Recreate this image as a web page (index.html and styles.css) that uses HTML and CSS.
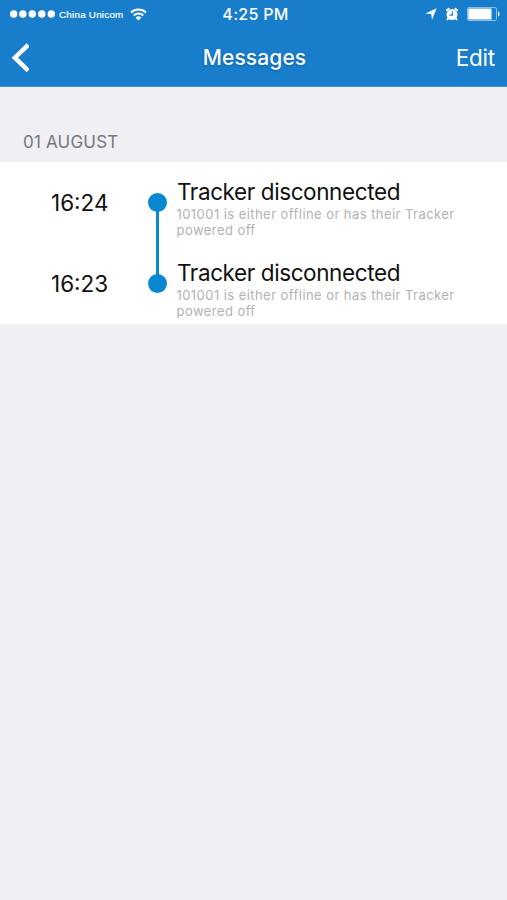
FILE: index.html
```html
<!DOCTYPE html>
<html lang="en">
<head>
<meta charset="utf-8">
<title>Messages</title>
<link rel="stylesheet" href="styles.css">
</head>
<body>
<header class="top">
  <div class="status">
    <div class="carrier">
      <svg class="signal" width="46" height="8" viewBox="0 0 46 8"><circle cx="3.7" cy="4" r="3.7"/><circle cx="12.9" cy="4" r="3.7"/><circle cx="22.3" cy="4" r="3.7"/><circle cx="31.8" cy="4" r="3.7"/><circle cx="41.3" cy="4" r="3.7"/></svg>
      <span class="carrier-name">China Unicom</span>
      <svg class="wifi" width="17" height="13" viewBox="0 0 17 13"><path d="M1 4.5a10.8 10.8 0 0 1 15 0M3.7 7.5a7 7 0 0 1 9.6 0" fill="none" stroke="#fff" stroke-width="2"/><path d="M8.5 12.5 5.6 9.7a4.2 4.2 0 0 1 5.8 0z"/></svg>
    </div>
    <span class="clock">4:25 PM</span>
    <div class="indicators">
      <svg width="12" height="12" viewBox="0 0 12 12"><path d="M11.7.3 7 11.7 6.2 6.1.3 5.4z"/></svg>
      <svg width="14" height="14" viewBox="0 0 14 14"><circle cx="7" cy="7.6" r="5.5"/><path d="M1.2 3.8 4.3 1.3M9.7 1.3l3.1 2.5M3.3 11.3 2 13M10.7 11.3 12 13" fill="none" stroke="#fff" stroke-width="1.9"/><path d="M7.3 4.3v3.8H4.5" fill="none" stroke="#187dca" stroke-width="1.2"/></svg>
      <svg width="33" height="14" viewBox="0 0 33 14"><rect x=".5" y=".5" width="29" height="13" rx="1.5" fill="none" stroke="#84c2ec"/><rect x="1.3" y="1.5" width="23.2" height="11" rx=".5"/><path d="M31 4.5c2 .5 2 4.5 0 5z"/></svg>
    </div>
  </div>
  <nav class="nav">
    <svg class="back" width="18" height="30" viewBox="0 0 18 30"><path d="M17.2 1.9 3.8 14.7l13.4 12.9" fill="none" stroke="#fff" stroke-width="4.4"/></svg>
    <h1 class="title">Messages</h1>
    <span class="edit">Edit</span>
  </nav>
</header>
<main>
  <h2 class="date">01 AUGUST</h2>
  <ul class="list">
    <li class="item">
      <time class="time">16:24</time>
      <span class="rail rail-first"><span class="dot"></span></span>
      <div class="message"><h3 class="subject">Tracker disconnected</h3><p class="detail">101001 is either offline or has their Tracker<br>powered off</p></div>
    </li>
    <li class="item">
      <time class="time">16:23</time>
      <span class="rail rail-last"><span class="dot"></span></span>
      <div class="message"><h3 class="subject">Tracker disconnected</h3><p class="detail">101001 is either offline or has their Tracker<br>powered off</p></div>
    </li>
  </ul>
</main>
</body>
</html>
```
FILE: styles.css
```css
* { box-sizing: border-box; margin: 0; padding: 0; }
body { min-height: 900px; background: #efeff4; font-family: Inter, "Liberation Sans", sans-serif; color: #111; }
svg { display: block; fill: #fff; flex: none; }
.top { height: 87px; background: #187dca; color: #fff; border-bottom: 1px solid #4c94cc; }
.status { height: 28px; display: grid; grid-template-columns: 1fr auto 1fr; align-items: center; padding: 0 7px 0 10px; }
.carrier { display: flex; align-items: center; }
.carrier-name { margin-left: 3px; padding-top: 1px; font: 500 9.8px/12px "Liberation Sans", sans-serif; width: 66px; white-space: nowrap; -webkit-text-stroke: .2px #fff; letter-spacing: .25px; }
.wifi { margin-left: 5px; }
.clock { font-size: 16px; line-height: 20px; font-weight: 500; letter-spacing: .3px; padding-left: 1px; }
.indicators { display: flex; justify-content: flex-end; align-items: center; gap: 8px; }
.nav { height: 58px; display: grid; grid-template-columns: 1fr auto 1fr; align-items: center; padding: 2px 12px 0 11px; }
.title { font-size: 21px; line-height: 26px; font-weight: 500; letter-spacing: .1px; padding-left: 3px; text-shadow: 0 1px 2px rgba(0, 40, 80, .35); }
.edit { justify-self: end; font-size: 22.5px; line-height: 28px; letter-spacing: -.2px; padding-bottom: 1px; }
.date { height: 75px; padding: 45px 23px 0; font-size: 17px; line-height: 20px; font-weight: 400; color: #77777c; letter-spacing: .2px; }
.list { list-style: none; background: #fff; }
.item { height: 81px; display: grid; grid-template-columns: 147px 20px 1fr; }
.time { padding: 26px 0 0 51px; font-size: 22.5px; line-height: 29px; }
.rail { display: flex; justify-content: center; align-items: flex-start; padding-top: 31px; }
.rail-first { background: linear-gradient(#0788d1, #0788d1) 50% 100% / 3px 40px no-repeat; }
.rail-last { background: linear-gradient(#0788d1, #0788d1) 50% 0 / 3px 40px no-repeat; }
.dot { width: 19px; height: 19px; border-radius: 50%; background: #0788d1; }
.message { padding: 15px 0 0 10px; white-space: nowrap; }
.subject { font-size: 22.5px; line-height: 29px; font-weight: 400; letter-spacing: -.4px; }
.detail { margin: 1px 0 0 -.5px; font-size: 13px; line-height: 15.5px; color: #b2b2b2; letter-spacing: .44px; }
```
